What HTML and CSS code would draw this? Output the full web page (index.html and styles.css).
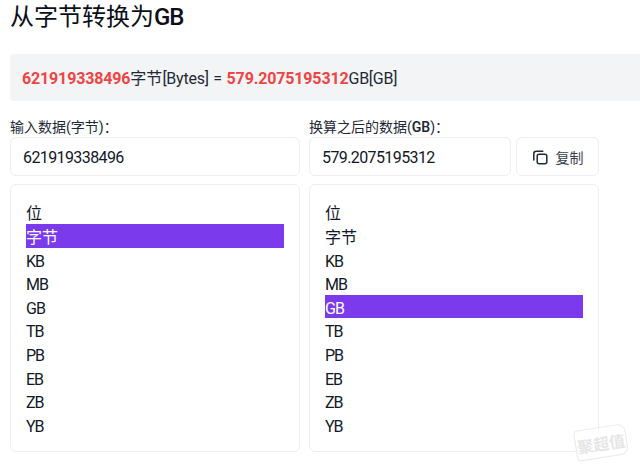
FILE: index.html
```html
<!DOCTYPE html>
<html lang="zh">
<head>
<meta charset="utf-8">
<title>从字节转换为GB</title>
<link rel="stylesheet" href="styles.css">
</head>
<body>
<h1 class="title">从字节转换为<span class="title-latin">GB</span></h1>
<div class="result">
  <strong class="num">621919338496</strong><span class="zh">字节</span>[Bytes] = <strong class="num">579.2075195312</strong>GB[GB]
</div>
<div class="columns">
  <section class="col">
    <label class="label">输入数据(字节)：</label>
    <div class="field-row">
      <div class="field">621919338496</div>
    </div>
    <ul class="card">
      <li class="item zh">位</li>
      <li class="item zh selected">字节</li>
      <li class="item">KB</li>
      <li class="item">MB</li>
      <li class="item">GB</li>
      <li class="item">TB</li>
      <li class="item">PB</li>
      <li class="item">EB</li>
      <li class="item">ZB</li>
      <li class="item">YB</li>
    </ul>
  </section>
  <section class="col">
    <label class="label">换算之后的数据(<b class="label-bold">GB</b>)：</label>
    <div class="field-row">
      <div class="field grow">579.2075195312</div>
      <button class="copy" type="button">
        <svg class="copy-icon" width="16" height="16" viewBox="0 0 16 16" fill="none" stroke="#1f2937" stroke-width="1.5" stroke-linecap="round" stroke-linejoin="round">
          <rect x="5.2" y="5.2" width="9.6" height="9.6" rx="2"/>
          <path d="M10.8 2.2H4.2a2.4 2.4 0 0 0-2.4 2.4v6.4"/>
        </svg>
        <span class="copy-text">复制</span>
      </button>
    </div>
    <ul class="card">
      <li class="item zh">位</li>
      <li class="item zh">字节</li>
      <li class="item">KB</li>
      <li class="item">MB</li>
      <li class="item selected">GB</li>
      <li class="item">TB</li>
      <li class="item">PB</li>
      <li class="item">EB</li>
      <li class="item">ZB</li>
      <li class="item">YB</li>
    </ul>
  </section>
</div>
<div class="watermark"><span class="watermark-text">聚超值</span></div>
</body>
</html>
```
FILE: styles.css
```css
* { box-sizing: border-box; }
html, body { height: 100%; }
body {
  margin: 0;
  padding: 0 0 0 10px;
  position: relative;
  overflow: hidden;
  background: #fff;
  color: #111827;
  font-family: Roboto, "Noto Sans CJK SC", sans-serif;
  font-size: 16px;
}
.title {
  margin: 0;
  height: 54px;
  font-size: 24px;
  line-height: 34px;
  font-weight: 400;
  color: #0b0f19;
}
.title-latin { font-weight: 500; letter-spacing: -1px; }
.result {
  height: 47px;
  padding: 0 12px;
  line-height: 49px;
  background: #f3f4f6;
  border-radius: 4px 0 0 4px;
  font-size: 16px;
  letter-spacing: -0.25px;
  word-spacing: 1px;
  color: #1f2937;
  white-space: nowrap;
}
.num { color: #ef4444; font-weight: 700; letter-spacing: -0.15px; }
.zh { letter-spacing: 0; }
.columns {
  display: flex;
  gap: 9px;
  margin-top: 17px;
  width: 589px;
}
.col {
  width: 290px;
  flex: none;
  display: flex;
  flex-direction: column;
}
.label {
  height: 19px;
  font-size: 14px;
  line-height: 18px;
  color: #1f2937;
}
.label-bold { font-weight: 600; }
.field-row {
  display: flex;
  gap: 5px;
  height: 39px;
}
.field {
  flex: 1;
  border: 1px solid #eceef1;
  border-radius: 6px;
  padding: 0 12px;
  line-height: 40px;
  font-size: 16px;
  letter-spacing: -0.6px;
  color: #111827;
}
.grow { flex: 1; }
.copy {
  width: 83px;
  flex: none;
  border: 1px solid #eceef1;
  border-radius: 6px;
  background: #fff;
  display: flex;
  align-items: center;
  justify-content: center;
  gap: 8px;
  padding: 0;
  font: inherit;
  font-size: 14px;
  color: #374151;
}
.copy-icon { flex: none; }
.card {
  list-style: none;
  margin: 8px 0 0;
  padding: 15.4px 15px 0;
  height: 268px;
  border: 1px solid #eceef1;
  border-radius: 6px;
}
.item {
  height: 23.6px;
  line-height: 27px;
  font-size: 16px;
  letter-spacing: -1px;
  color: #111827;
}
.item.zh { letter-spacing: 0; }
.selected { background: #7c3aed; color: #fff; }
.watermark {
  position: absolute;
  left: 575px;
  top: 427px;
  width: 52px;
  height: 31px;
  border: 1.5px solid #e8e8e8;
  border-radius: 4px 8px 8px 4px;
  background: rgba(255, 255, 255, 0.7);
  transform: rotate(-9deg);
  display: flex;
  align-items: center;
  justify-content: center;
}
.watermark-text {
  font-size: 16px;
  font-weight: 700;
  color: #e6e6e6;
  white-space: nowrap;
}
```
